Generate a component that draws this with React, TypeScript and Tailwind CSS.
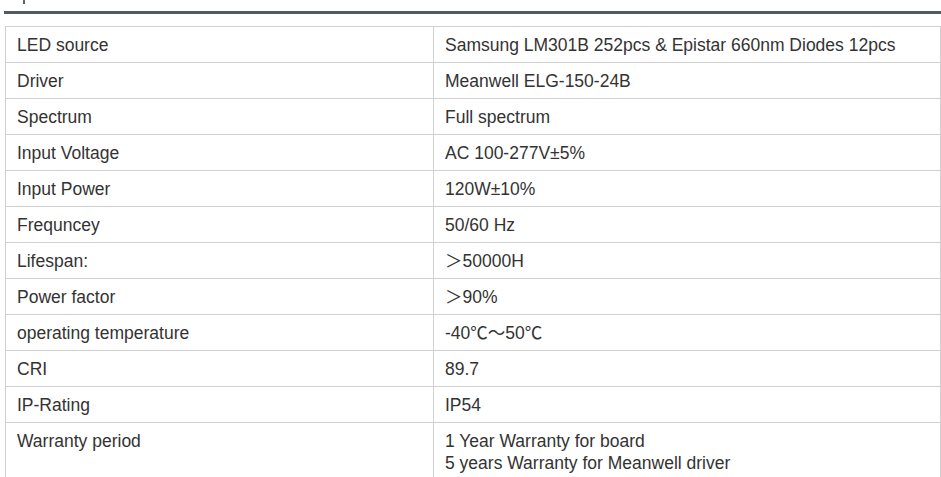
import React from 'react';

const specs: [string, string[]][] = [
  ['LED source', ['Samsung LM301B 252pcs & Epistar 660nm Diodes 12pcs']],
  ['Driver', ['Meanwell ELG-150-24B']],
  ['Spectrum', ['Full spectrum']],
  ['Input Voltage', ['AC 100-277V±5%']],
  ['Input Power', ['120W±10%']],
  ['Frequncey', ['50/60 Hz']],
  ['Lifespan:', ['＞50000H']],
  ['Power factor', ['＞90%']],
  ['operating temperature', ['-40℃～50℃']],
  ['CRI', ['89.7']],
  ['IP-Rating', ['IP54']],
  ['Warranty period', ['1 Year Warranty for board', '5 years Warranty for Meanwell driver']],
];

export default function App() {
  return (
    <div
      className="w-[941px] h-[477px] overflow-hidden bg-white text-[#333] text-[17.5px]"
      style={{ fontFamily: '"Liberation Sans", Arial, "Noto Sans CJK SC", sans-serif' }}
    >
      {/* tail of the section heading, scrolled out of view */}
      <div className="h-[11px] pl-[23px]">
        <div className="w-[2px] h-[4px] bg-[#666]" />
      </div>
      <div className="ml-[4px] h-[3px] bg-[#525a64]" />

      <table className="mt-[12px] ml-[5px] w-[936px] border-collapse">
        <tbody>
          {specs.map(([label, value]) => (
            <tr key={label}>
              <td className="w-[428px] border border-[#d0d0d0] pl-[11px] pt-[7px] pb-[6px] leading-[22px] align-top">
                {label}
              </td>
              <td className="border border-[#d0d0d0] pl-[11px] pt-[7px] pb-[6px] leading-[22px] align-top">
                {value.map((line) => (
                  <div key={line}>{line}</div>
                ))}
              </td>
            </tr>
          ))}
        </tbody>
      </table>
    </div>
  );
}
